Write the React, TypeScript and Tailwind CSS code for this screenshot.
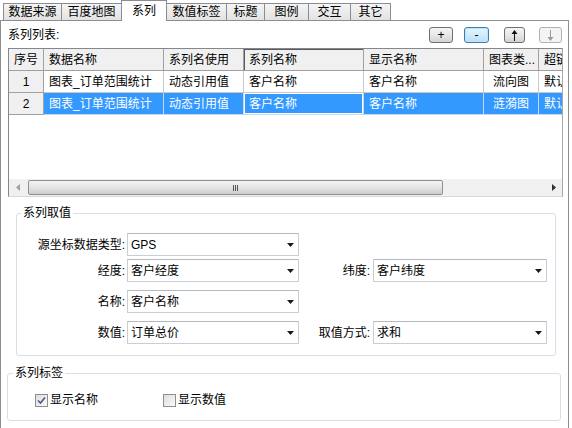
import React from "react";

const TABS: { label: string; w: string; active?: boolean }[] = [
  { label: "数据来源", w: "w-[59px]" },
  { label: "百度地图", w: "w-[61px]" },
  { label: "系列", w: "w-[46px]", active: true },
  { label: "数值标签", w: "w-[61px]" },
  { label: "标题", w: "w-[39px]" },
  { label: "图例", w: "w-[45px]" },
  { label: "交互", w: "w-[43px]" },
  { label: "其它", w: "w-[41px]" },
];

const COLS: { title: string; w: string; align?: "center" }[] = [
  { title: "序号", w: "w-[35px]", align: "center" },
  { title: "数据名称", w: "w-[120px]" },
  { title: "系列名使用", w: "w-[80px]" },
  { title: "系列名称", w: "w-[120px]" },
  { title: "显示名称", w: "w-[120px]" },
  { title: "图表类...", w: "w-[55px]" },
  { title: "超链接", w: "w-[70px]" },
];

const ROWS = [
  ["1", "图表_订单范围统计", "动态引用值", "客户名称", "客户名称", "流向图", "默认"],
  ["2", "图表_订单范围统计", "动态引用值", "客户名称", "客户名称", "涟漪图", "默认"],
];

function Caret() {
  return (
    <svg width="7" height="4" viewBox="0 0 7 4" className="shrink-0">
      <path d="M0 0H7L3.5 4Z" fill="#1a1a1a" />
    </svg>
  );
}

function Select({ value, w }: { value: string; w: string }) {
  return (
    <div
      className={`${w} flex h-[23px] items-center border border-[#c9ced6] border-t-[#b4b8bf] bg-white pl-[3px] pr-[4px]`}
    >
      <span className="flex-1 truncate">{value}</span>
      <Caret />
    </div>
  );
}

function Checkbox({ checked }: { checked?: boolean }) {
  return (
    <span className="flex h-[13px] w-[13px] shrink-0 items-center justify-center border border-[#8f8f8f] bg-gradient-to-br from-[#dedede] to-[#fafafa]">
      {checked && (
        <svg width="9" height="9" viewBox="0 0 9 9">
          <path d="M1 4.5L3.5 7L8 1.5" fill="none" stroke="#4a5d8f" strokeWidth="1.7" />
        </svg>
      )}
    </span>
  );
}

function ToolButton({
  children,
  w,
  variant = "normal",
}: {
  children: React.ReactNode;
  w: string;
  variant?: "normal" | "focus" | "disabled";
}) {
  const look =
    variant === "focus"
      ? "border-[#3c7fb1] bg-gradient-to-b from-[#e8f5fd] to-[#b9e1f8] shadow-[inset_0_0_0_1px_#bfe4f8]"
      : variant === "disabled"
        ? "border-[#adb2b5] bg-[#f4f4f4] text-[#9a9a9a]"
        : "border-[#707070] bg-gradient-to-b from-[#f4f4f4] via-[#e8e8e8] to-[#d3d3d3]";
  return (
    <div
      className={`${w} ${look} flex h-[16px] items-center justify-center rounded-[3px] border text-[12px] leading-none`}
    >
      {children}
    </div>
  );
}

function Arrow({ up, color }: { up?: boolean; color: string }) {
  return (
    <svg width="7" height="11" viewBox="0 0 7 11">
      {up ? (
        <>
          <path d="M3.5 0L6.5 4H0.5Z" fill={color} />
          <path d="M3.5 3V11" stroke={color} strokeWidth="1" />
        </>
      ) : (
        <>
          <path d="M3.5 11L6.5 7H0.5Z" fill={color} />
          <path d="M3.5 0V8" stroke={color} strokeWidth="1" />
        </>
      )}
    </svg>
  );
}

function Grid() {
  return (
    <div className="ml-[7px] mt-[5px] flex h-[149px] w-[555px] flex-col overflow-hidden border border-[#828790] border-r-[#a8a8a8] border-b-[#d8d8d8] bg-white">
      <div className="flex h-[22px] shrink-0">
        {COLS.map((c, i) => (
          <div
            key={c.title}
            className={`${c.w} flex shrink-0 items-center whitespace-nowrap border-b border-r border-[#a0a0a0] bg-[#f0f0f0] ${
              c.align === "center" ? "justify-center" : "pl-[5px]"
            } ${i === 3 ? "shadow-[inset_1px_1px_0_#5a5a5a]" : ""}`}
          >
            {c.title}
          </div>
        ))}
      </div>
      {ROWS.map((row, r) => {
        const selected = r === 1;
        return (
          <div key={r} className="flex h-[22px] shrink-0">
            {row.map((cell, i) => {
              const col = COLS[i];
              const base = `${col.w} flex shrink-0 items-center whitespace-nowrap overflow-hidden border-b border-r`;
              if (i === 0)
                return (
                  <div key={i} className={`${base} justify-center border-[#a0a0a0] bg-[#f0f0f0]`}>
                    {cell}
                  </div>
                );
              const align = i === 5 ? "justify-center" : "pl-[5px]";
              const look = selected
                ? "border-[#c8d8e8] bg-[#3399ff] text-white"
                : "border-[#c8c8c8] bg-white";
              const focus = selected && i === 3 ? "shadow-[inset_0_0_0_1px_#ffffff]" : "";
              return (
                <div key={i} className={`${base} ${align} ${look} ${focus}`}>
                  {cell}
                </div>
              );
            })}
          </div>
        );
      })}
      <div className="flex-1" />
      <div className="flex h-[17px] shrink-0 items-stretch bg-[#f0f0f0]">
        <div className="flex w-[17px] items-center justify-center">
          <svg width="4" height="7" viewBox="0 0 4 7">
            <path d="M4 0V7L0 3.5Z" fill="#a0a0a0" />
          </svg>
        </div>
        <div className="my-[1px] ml-[2px] flex w-[415px] items-center justify-center rounded-[2px] border border-[#8f8f8f] bg-gradient-to-b from-[#f3f3f3] via-[#e4e4e4] to-[#cdcdcd]">
          <div className="flex gap-[1px]">
            <span className="h-[6px] w-[1px] bg-[#555]" />
            <span className="h-[6px] w-[1px] bg-[#555]" />
            <span className="h-[6px] w-[1px] bg-[#555]" />
          </div>
        </div>
        <div className="flex-1" />
        <div className="flex w-[17px] items-center justify-center">
          <svg width="4" height="7" viewBox="0 0 4 7">
            <path d="M0 0V7L4 3.5Z" fill="#303030" />
          </svg>
        </div>
      </div>
    </div>
  );
}

export default function App() {
  return (
    <div className="h-[428px] w-[572px] overflow-hidden bg-white font-['Liberation_Sans','Noto_Sans_CJK_SC',sans-serif] text-[12px] leading-[14px] text-black">
      <div className="relative z-10 flex h-[21px] items-end pl-[3px]">
        {TABS.map((t, i) =>
          t.active ? (
            <div
              key={t.label}
              className={`${t.w} -ml-px h-[21px] border border-b-0 border-[#898c95] bg-white pt-[2px] text-center leading-[16px]`}
            >
              {t.label}
            </div>
          ) : (
            <div
              key={t.label}
              className={`${t.w} ${i > 0 ? "-ml-px" : ""} mb-px h-[17px] border border-b-0 border-[#898c95] bg-gradient-to-b from-[#f5f5f5] to-[#e2e2e2] text-center leading-[16px]`}
            >
              {t.label}
            </div>
          ),
        )}
      </div>
      <div className="-mt-px h-[408px] w-[569px] border border-b-0 border-[#8c8e94] bg-white">
        <div className="mt-[6px] flex h-[16px] items-center pl-[7px] pr-[6px]">
          <span>系列列表:</span>
          <div className="ml-auto flex items-center">
            <ToolButton w="w-[24px]">+</ToolButton>
            <div className="ml-[11px]">
              <ToolButton w="w-[25px]" variant="focus">
                -
              </ToolButton>
            </div>
            <div className="ml-[15px]">
              <ToolButton w="w-[21px]">
                <Arrow up color="#111" />
              </ToolButton>
            </div>
            <div className="ml-[14px]">
              <ToolButton w="w-[23px]" variant="disabled">
                <Arrow color="#9a9a9a" />
              </ToolButton>
            </div>
          </div>
        </div>

        <Grid />

        <fieldset className="ml-[15px] mt-[9px] w-[540px] rounded-[3px] border border-[#d5dfe5] px-0 pb-[11px]">
          <legend className="ml-[4px] px-[2px]">系列取值</legend>
          <div className="flex flex-col pt-[13px]">
            <div className="flex h-[23px] items-center">
              <span className="w-[110px] pr-[2px] text-right">源坐标数据类型:</span>
              <Select value="GPS" w="w-[172px]" />
            </div>
            <div className="mt-[3px] flex h-[23px] items-center">
              <span className="w-[110px] pr-[2px] text-right">经度:</span>
              <Select value="客户经度" w="w-[172px]" />
              <span className="w-[74px] pr-[3px] text-right">纬度:</span>
              <Select value="客户纬度" w="w-[174px]" />
            </div>
            <div className="mt-[8px] flex h-[23px] items-center">
              <span className="w-[110px] pr-[2px] text-right">名称:</span>
              <Select value="客户名称" w="w-[172px]" />
            </div>
            <div className="mt-[8px] flex h-[23px] items-center">
              <span className="w-[110px] pr-[2px] text-right">数值:</span>
              <Select value="订单总价" w="w-[172px]" />
              <span className="w-[74px] pr-[3px] text-right">取值方式:</span>
              <Select value="求和" w="w-[174px]" />
            </div>
          </div>
        </fieldset>

        <fieldset className="ml-[6px] mt-[10px] w-[554px] rounded-[3px] border border-[#d5dfe5] px-0 pb-[13px]">
          <legend className="ml-[5px] px-[2px]">系列标签</legend>
          <div className="flex items-center pl-[27px] pt-[13px]">
            <label className="flex w-[128px] items-center gap-[2px]">
              <Checkbox checked />
              <span>显示名称</span>
            </label>
            <label className="flex items-center gap-[2px]">
              <Checkbox />
              <span>显示数值</span>
            </label>
          </div>
        </fieldset>
      </div>
    </div>
  );
}
